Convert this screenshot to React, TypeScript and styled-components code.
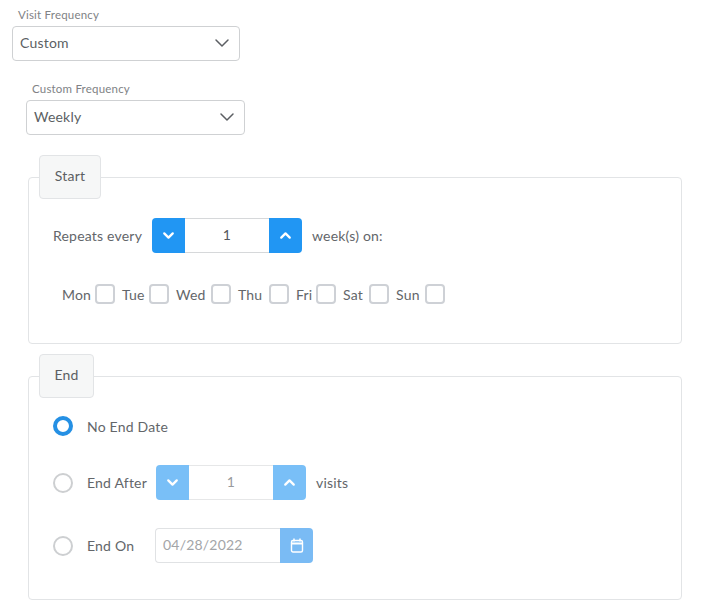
import React from "react";
import styled, { createGlobalStyle } from "styled-components";
import { ChevronDown, ChevronUp } from "lucide-react";

const GlobalStyle = createGlobalStyle`
  html, body {
    margin: 0;
    padding: 0;
    background: #fff;
    font-family: "Lato", "Noto Sans", sans-serif;
    letter-spacing: 0.2px;
    color: #5c5f63;
  }
`;

const Page = styled.div`
  width: 709px;
  height: 614px;
  overflow: hidden;
  box-sizing: border-box;
  padding: 6px 27px 0 12px;
`;

const SelectField = styled.div<{ $indent: number; $width: number; $gap: number }>`
  width: ${(p) => p.$width}px;
  margin-left: ${(p) => p.$indent}px;
  margin-bottom: ${(p) => p.$gap}px;
`;

const FieldLabel = styled.div`
  font-size: 11.5px;
  line-height: 18px;
  margin-bottom: 2px;
  padding-left: 6px;
  color: #808285;
`;

const SelectBox = styled.div`
  height: 35px;
  box-sizing: border-box;
  border: 1px solid #cfd1d3;
  border-radius: 4px;
  display: flex;
  align-items: center;
  justify-content: space-between;
  padding: 0 5px 2px 7px;
  font-size: 14px;
  color: #5c5f63;
`;

const Group = styled.fieldset<{ $height: number }>`
  height: ${(p) => p.$height}px;
  box-sizing: border-box;
  margin: 0 0 10px 16px;
  padding: 0 10px 0 24px;
  border: 1px solid #e2e4e6;
  border-radius: 4px;
  min-width: 0;
`;

const GroupTitle = styled.legend<{ $width: number }>`
  width: ${(p) => p.$width}px;
  height: 44px;
  box-sizing: border-box;
  margin-left: -14px;
  padding: 0 0 3px;
  display: flex;
  align-items: center;
  justify-content: center;
  border: 1px solid #e2e4e6;
  border-radius: 4px;
  background: #f6f7f7;
  font-size: 14px;
  color: #5c5f63;
`;

const Row = styled.div<{ $top: number }>`
  display: flex;
  align-items: center;
  gap: 10px;
  margin-top: ${(p) => p.$top}px;
  font-size: 14px;
  color: #63666a;
`;

const Stepper = styled.div<{ $muted?: boolean }>`
  width: 150px;
  height: 35px;
  display: flex;
  opacity: ${(p) => (p.$muted ? 0.6 : 1)};
`;

const StepButton = styled.div<{ $side: "left" | "right" }>`
  width: 33px;
  height: 35px;
  display: flex;
  align-items: center;
  justify-content: center;
  background: #2196f3;
  color: #fff;
  border-radius: ${(p) => (p.$side === "left" ? "4px 0 0 4px" : "0 4px 4px 0")};
`;

const StepValue = styled.div`
  flex: 1;
  box-sizing: border-box;
  border-top: 1px solid #d6d8da;
  border-bottom: 1px solid #d6d8da;
  display: flex;
  align-items: center;
  justify-content: center;
  padding-bottom: 2px;
  font-size: 14px;
  color: #55585c;
`;

const DayRow = styled.div`
  display: flex;
  align-items: center;
  margin-top: 31px;
  padding-left: 9px;
  font-size: 14px;
  color: #63666a;
`;

const DayLabel = styled.span<{ $width: number }>`
  width: ${(p) => p.$width}px;
`;

const Check = styled.span`
  width: 20px;
  height: 20px;
  box-sizing: border-box;
  border: 2px solid #ced1d6;
  border-radius: 4px;
  background: #fff;
  margin-right: 7px;
`;

const Radio = styled.span<{ $on?: boolean }>`
  width: 20px;
  height: 20px;
  box-sizing: border-box;
  flex: none;
  margin-right: 4px;
  border-radius: 50%;
  border: ${(p) => (p.$on ? "4px solid #2590e4" : "2px solid #cdcfd1")};
  background: #fff;
`;

const RowLabel = styled.span<{ $width: number }>`
  width: ${(p) => p.$width}px;
  flex: none;
  white-space: nowrap;
`;

const DateField = styled.div`
  width: 158px;
  height: 35px;
  display: flex;
  margin-left: -1px;
`;

const DateValue = styled.div`
  flex: 1;
  box-sizing: border-box;
  border: 1px solid #e0e2e4;
  border-right: 0;
  border-radius: 4px 0 0 4px;
  display: flex;
  align-items: center;
  padding: 0 0 2px 7px;
  font-size: 14px;
  color: #a3a5a8;
`;

const DateButton = styled.div`
  width: 33px;
  background: #7abbf4;
  color: #fff;
  border-radius: 0 4px 4px 0;
  display: flex;
  align-items: center;
  justify-content: center;
`;

const days = [
  { name: "Mon", width: 33 },
  { name: "Tue", width: 27 },
  { name: "Wed", width: 35 },
  { name: "Thu", width: 31 },
  { name: "Fri", width: 20 },
  { name: "Sat", width: 26 },
  { name: "Sun", width: 29 },
];

const NumberStepper = ({ muted }: { muted?: boolean }) => (
  <Stepper $muted={muted}>
    <StepButton $side="left">
      <ChevronDown size={17} strokeWidth={3.2} />
    </StepButton>
    <StepValue>1</StepValue>
    <StepButton $side="right">
      <ChevronUp size={17} strokeWidth={3.2} />
    </StepButton>
  </Stepper>
);

const CalendarGlyph = () => (
  <svg width="14" height="15" viewBox="0 0 14 15" fill="none" stroke="currentColor">
    <rect x="1.5" y="2.5" width="11" height="11.5" rx="1.5" strokeWidth="1.4" />
    <path d="M1.5 5.5h11" strokeWidth="2" />
    <path d="M4 0.5v3M10 0.5v3" strokeWidth="1.5" />
  </svg>
);

export default function App() {
  return (
    <Page>
      <GlobalStyle />
      <SelectField $indent={0} $width={228} $gap={19}>
        <FieldLabel>Visit Frequency</FieldLabel>
        <SelectBox>
          Custom
          <ChevronDown size={24} strokeWidth={1.5} />
        </SelectBox>
      </SelectField>
      <SelectField $indent={14} $width={219} $gap={20}>
        <FieldLabel>Custom Frequency</FieldLabel>
        <SelectBox>
          Weekly
          <ChevronDown size={24} strokeWidth={1.5} />
        </SelectBox>
      </SelectField>

      <Group $height={189}>
        <GroupTitle $width={62}>Start</GroupTitle>
        <Row $top={19}>
          <RowLabel $width={89}>Repeats every</RowLabel>
          <NumberStepper />
          <span>week(s) on:</span>
        </Row>
        <DayRow>
          {days.map((d) => (
            <React.Fragment key={d.name}>
              <DayLabel $width={d.width}>{d.name}</DayLabel>
              <Check />
            </React.Fragment>
          ))}
        </DayRow>
      </Group>

      <Group $height={246}>
        <GroupTitle $width={55}>End</GroupTitle>
        <Row $top={18}>
          <Radio $on />
          <span>No End Date</span>
        </Row>
        <Row $top={29}>
          <Radio />
          <RowLabel $width={59}>End After</RowLabel>
          <NumberStepper muted />
          <span>visits</span>
        </Row>
        <Row $top={28}>
          <Radio />
          <RowLabel $width={59}>End On</RowLabel>
          <DateField>
            <DateValue>04/28/2022</DateValue>
            <DateButton>
              <CalendarGlyph />
            </DateButton>
          </DateField>
        </Row>
      </Group>
    </Page>
  );
}
